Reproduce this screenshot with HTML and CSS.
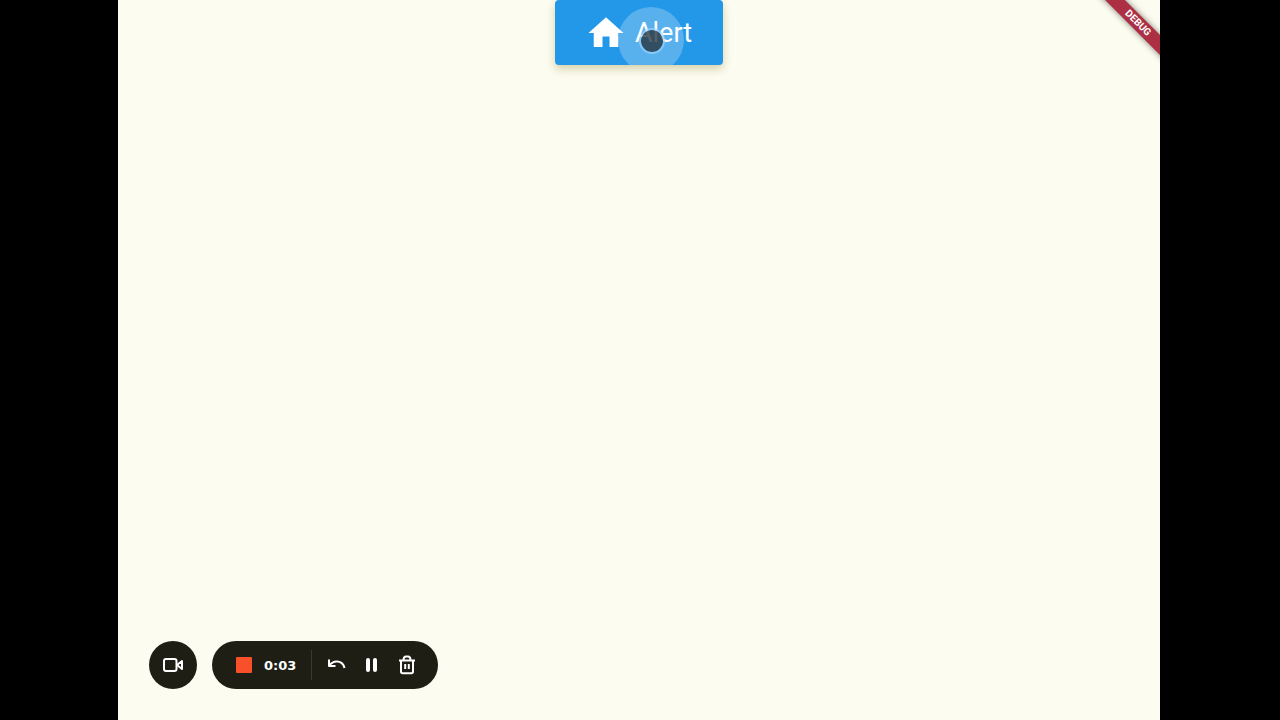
FILE: index.html
```html
<!DOCTYPE html>
<html lang="en">
<head>
<meta charset="utf-8">
<meta name="viewport" content="width=device-width, initial-scale=1">
<title>Alert</title>
<link rel="stylesheet" href="styles.css">
</head>
<body>
<main class="screen">
  <button class="alert-button" type="button">
    <svg class="home-icon" viewBox="0 0 24 24" aria-hidden="true"><path d="M10 20v-6h4v6h5v-8h3L12 3 2 12h3v8z"/></svg>
    <span>Alert</span>
    <span class="ripple"></span>
    <span class="pointer"></span>
  </button>
  <div class="debug-corner"><span class="debug-banner">DEBUG</span></div>
  <div class="recorder">
    <button class="camera-button" type="button" aria-label="Camera">
      <svg class="camera-icon" viewBox="0 0 24 24" aria-hidden="true"><rect x="3" y="6" width="12.5" height="12" rx="2"/><path d="M16 12l5-4v8z"/></svg>
    </button>
    <div class="controls">
      <button class="stop-button" type="button" aria-label="Stop recording"></button>
      <time class="timer">0:03</time>
      <span class="divider"></span>
      <div class="actions">
        <button class="action" type="button" aria-label="Restart">
          <svg viewBox="0 0 20 20" aria-hidden="true"><path d="M2 4.500v6.500h6.500M2.500 10.500C6 5 15.500 4.500 17.500 13"/></svg>
        </button>
        <button class="action" type="button" aria-label="Pause">
          <svg viewBox="0 0 20 20" aria-hidden="true"><path class="bars" d="M6 5v10M13 5v10"/></svg>
        </button>
        <button class="action" type="button" aria-label="Delete">
          <svg viewBox="0 0 20 20" aria-hidden="true"><path d="M2 5.500h16M4 6v10.500c0 1 .7 1.700 1.700 1.700h8.600c1 0 1.700-.7 1.700-1.700V6M6.500 5c0-2.500 1-3.500 2.500-3.500h2c1.500 0 2.500 1 2.500 3.500M8.200 9v5M11.800 9v5"/></svg>
        </button>
      </div>
    </div>
  </div>
</main>
</body>
</html>
```
FILE: styles.css
```css
* { box-sizing: border-box; }

body {
  margin: 0;
  padding: 0 120px 0 118px;
  background: #000;
  font-family: Roboto, sans-serif;
}

button {
  margin: 0;
  padding: 0;
  border: 0;
  font: inherit;
  color: inherit;
  cursor: pointer;
}

.screen {
  position: relative;
  display: flex;
  flex-direction: column;
  justify-content: space-between;
  min-height: 100vh;
  background: #fcfcf0;
}

.alert-button {
  position: relative;
  display: flex;
  align-items: center;
  align-self: center;
  gap: 8px;
  padding: 12px 31px 11px 30px;
  border-radius: 4px;
  overflow: hidden;
  background: #2498e8;
  box-shadow: 0 4px 8px rgba(140, 130, 40, 0.35);
  color: #fff;
  font-size: 27px;
  line-height: 32px;
}

.home-icon {
  width: 42px;
  height: 42px;
  fill: currentColor;
}

.ripple {
  position: absolute;
  top: 7px;
  left: 63px;
  width: 66px;
  height: 66px;
  border-radius: 50%;
  background: rgba(255, 255, 255, 0.24);
}

.pointer {
  position: absolute;
  top: 28px;
  left: 84px;
  width: 26px;
  height: 26px;
  border: 2px solid rgba(160, 215, 255, 0.65);
  border-radius: 50%;
  background: rgba(40, 50, 60, 0.78);
  background-clip: padding-box;
}

.debug-corner {
  position: absolute;
  top: 0;
  right: 0;
  width: 80px;
  height: 80px;
  overflow: hidden;
}

.debug-banner {
  position: absolute;
  top: 16px;
  left: -2px;
  width: 120px;
  background: #ac2f43;
  box-shadow: 0 0 6px rgba(0, 0, 0, 0.5);
  color: #fff;
  font-size: 10px;
  font-weight: 700;
  line-height: 14px;
  text-align: center;
  transform: rotate(45deg);
}

.recorder {
  display: flex;
  gap: 15px;
  padding: 0 31px 31px;
}

.camera-button {
  display: grid;
  place-items: center;
  width: 48px;
  height: 48px;
  border-radius: 50%;
  background: #1e1e14;
  color: #fff;
}

.controls {
  display: flex;
  align-items: center;
  height: 48px;
  padding: 0 21px 0 24px;
  border-radius: 24px;
  background: #1e1e14;
  color: #fff;
}

.camera-icon,
.action svg {
  display: block;
  fill: none;
  stroke: currentColor;
  stroke-width: 2;
  stroke-linejoin: round;
}

.camera-icon {
  width: 24px;
  height: 24px;
}

.stop-button {
  width: 16px;
  height: 16px;
  border-radius: 1px;
  background: #f9502c;
}

.timer {
  margin: 0 15px 0 12px;
  font-family: "DejaVu Sans", sans-serif;
  font-size: 13px;
  font-weight: 700;
}

.divider {
  width: 1px;
  height: 30px;
  background: #3a3a2c;
}

.actions {
  display: flex;
  gap: 15px;
  margin-left: 15px;
}

.action {
  width: 20px;
  height: 20px;
  background: transparent;
}

.action .bars {
  stroke-width: 4;
  stroke-linecap: round;
}
```
